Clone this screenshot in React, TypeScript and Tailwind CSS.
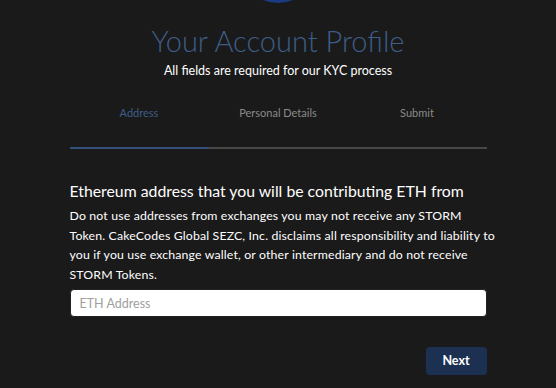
import React from 'react';

const steps = ['Address', 'Personal Details', 'Submit'];

const App: React.FC = () => {
    return (
        <div className="relative min-h-[388px] w-full overflow-hidden bg-[#1a1a1a] font-['Lato',sans-serif] text-white">
            <div className="absolute left-1/2 top-[-77px] h-[80px] w-[80px] -translate-x-1/2 rounded-full bg-[#1b3a80]" />
            <div className="mx-auto w-[417px] pt-[23px]">
                <h1 className="text-center text-[29px] font-light leading-[36px] text-[#3e5d88]">
                    Your Account Profile
                </h1>
                <p className="mt-[3px] text-center text-[12.5px] leading-[18px] text-white">
                    All fields are required for our KYC process
                </p>
                <div className="mt-[25px] grid grid-cols-3">
                    {steps.map((step, i) => (
                        <div key={step} className="flex flex-col">
                            <div
                                className={`text-center text-[11px] leading-[16px] ${
                                    i === 0 ? 'text-[#3e5d88]' : 'text-[#8a8a8a]'
                                }`}
                            >
                                {step}
                            </div>
                            <div
                                className={`mt-[26px] h-[2px] ${i === 0 ? 'bg-[#34507a]' : 'bg-[#474747]'}`}
                            />
                        </div>
                    ))}
                </div>
                <h2 className="mt-[31px] text-[15.8px] leading-[22px] text-white">
                    Ethereum address that you will be contributing ETH from
                </h2>
                <p className="mt-[4px] whitespace-nowrap text-[12.3px] leading-[19.5px] tracking-[0.15px] text-white">
                    Do not use addresses from exchanges you may not receive any STORM
                    <br />
                    Token. CakeCodes Global SEZC, Inc. disclaims all responsibility and liability to
                    <br />
                    you if you use exchange wallet, or other intermediary and do not receive
                    <br />
                    STORM Tokens.
                </p>
                <input
                    type="text"
                    placeholder="ETH Address"
                    className="mt-[5px] h-[28px] w-full rounded-[4px] border border-[#222] bg-white px-[9px] text-[12.5px] text-[#333] placeholder:text-[#a0a0a0] outline-none"
                />
                <div className="mt-[30px] flex justify-end">
                    <button className="h-[28px] w-[61px] rounded-[4px] bg-[#1c3152] text-[12.5px] font-bold text-white">
                        Next
                    </button>
                </div>
            </div>
        </div>
    );
};

export default App;
